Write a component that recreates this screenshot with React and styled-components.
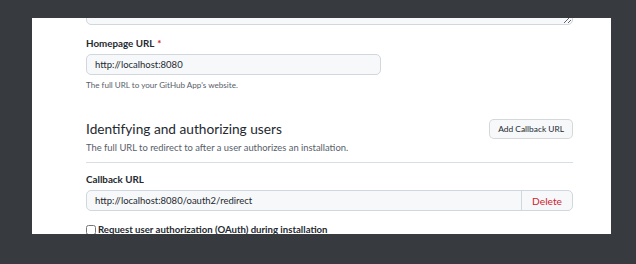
import styled, { createGlobalStyle } from "styled-components"

const Global = createGlobalStyle`
  body {
    margin: 0;
    background: #373b3f;
    font-family: Lato, "Liberation Sans", sans-serif;
    color: #24292f;
  }
`

const Page = styled.div`
  height: 264px;
  padding: 18px 0 0 32px;
  box-sizing: border-box;
  overflow: hidden;
`

const Panel = styled.div`
  width: 579px;
  height: 216px;
  background: #fff;
  overflow: hidden;
`

const Column = styled.div`
  width: 487px;
  margin-left: 54px;
`

const TextArea = styled.textarea`
  display: block;
  width: 100%;
  height: 60px;
  margin: -53px 0 0;
  box-sizing: border-box;
  background: #f6f8fa;
  border: 1px solid #d0d7de;
  border-radius: 5px;
  resize: vertical;
  font: inherit;
`

const Label = styled.label`
  display: block;
  font-size: 9.8px;
  font-weight: 700;
  line-height: 15px;
  margin: ${(p) => p.$top || 0}px 0 3px;
`

const Required = styled.span`
  color: #cf222e;
  margin-left: 3px;
`

const Input = styled.div`
  width: ${(p) => p.$width || "100%"};
  height: 21px;
  box-sizing: border-box;
  display: flex;
  align-items: center;
  padding: 0 8px;
  background: #f6f8fa;
  border: 1px solid #d0d7de;
  border-radius: 5px;
  font-size: 9.5px;
  color: #24292f;
`

const Note = styled.p`
  margin: 4px 0 0;
  font-size: 8.1px;
  line-height: 12px;
  color: #57606a;
`

const SubheadRow = styled.div`
  display: flex;
  align-items: center;
  justify-content: space-between;
  margin-top: 28px;
  height: 20px;
`

const Heading = styled.h2`
  margin: 0;
  font-size: 13.7px;
  font-weight: 400;
  line-height: 20px;
`

const Button = styled.button`
  height: 20px;
  padding: 0 8px;
  background: #f6f8fa;
  border: 1px solid rgba(27, 31, 36, 0.15);
  border-radius: 5px;
  font-family: inherit;
  font-size: 8.4px;
  font-weight: 400;
  color: #24292f;
`

const Description = styled.p`
  margin: 3px 0 0;
  font-size: 9.4px;
  line-height: 12px;
  color: #57606a;
  padding-bottom: 8px;
  border-bottom: 1px solid #d8dee4;
`

const InputGroup = styled.div`
  display: flex;
  height: 21px;
  border: 1px solid #d0d7de;
  border-radius: 5px;
  background: #f6f8fa;
  box-sizing: border-box;
  overflow: hidden;
`

const GroupField = styled.div`
  flex: 1;
  display: flex;
  align-items: center;
  padding: 0 8px;
  font-size: 9.5px;
`

const DeleteButton = styled.div`
  width: 50px;
  display: flex;
  align-items: center;
  justify-content: center;
  border-left: 1px solid #d0d7de;
  color: #cf222e;
  font-size: 10.2px;
`

const CheckRow = styled.label`
  display: flex;
  align-items: center;
  gap: 2px;
  margin-top: 12px;
  font-size: 9.6px;
  font-weight: 700;
  line-height: 14px;
`

const Check = styled.input`
  width: 10px;
  height: 10px;
  margin: 0;
`

export default function App() {
  return (
    <Page>
      <Global />
      <Panel>
        <Column>
          <TextArea readOnly />
          <Label $top={11}>
            Homepage URL<Required>*</Required>
          </Label>
          <Input $width="295px">http://localhost:8080</Input>
          <Note>The full URL to your GitHub App's website.</Note>

          <SubheadRow>
            <Heading>Identifying and authorizing users</Heading>
            <Button>Add Callback URL</Button>
          </SubheadRow>
          <Description>
            The full URL to redirect to after a user authorizes an installation.
          </Description>

          <Label $top={9}>Callback URL</Label>
          <InputGroup>
            <GroupField>http://localhost:8080/oauth2/redirect</GroupField>
            <DeleteButton>Delete</DeleteButton>
          </InputGroup>
          <CheckRow>
            <Check type="checkbox" />
            Request user authorization (OAuth) during installation
          </CheckRow>
        </Column>
      </Panel>
    </Page>
  )
}
